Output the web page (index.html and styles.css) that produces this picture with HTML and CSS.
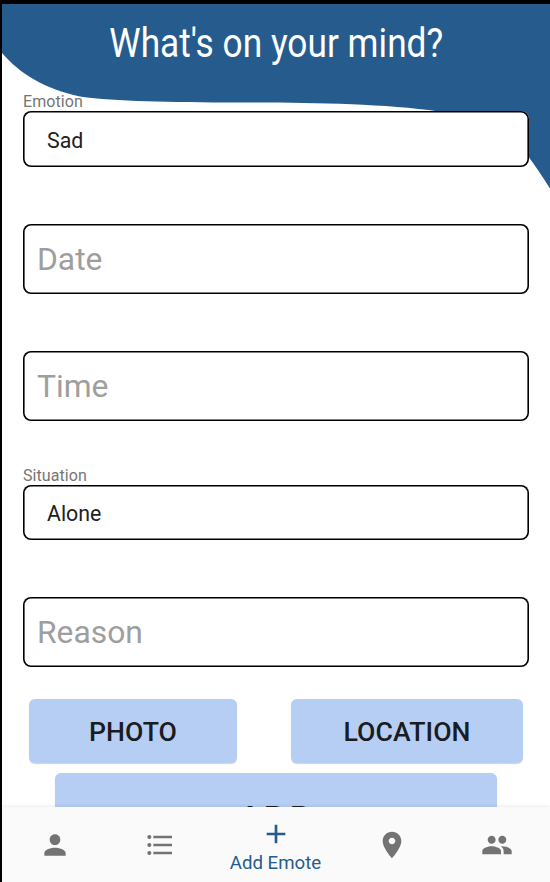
FILE: index.html
```html
<!DOCTYPE html>
<html lang="en">
<head>
<meta charset="utf-8">
<title>Add Emote</title>
<link rel="stylesheet" href="styles.css">
</head>
<body>
<div class="screen">
  <svg class="wave" viewBox="0 0 548 186" aria-hidden="true"><path d="M0 0H548V184.500Q535 164 527 153.500C503 122 479 115 437 107.500C380 99.500 310 98.700 238 98.500C165 98.300 115 97.500 78 92.500C43 85 18 70 0 49Z"/></svg>
  <main class="form">
    <h1 class="title"><span class="title-text">What's on your mind?</span></h1>
    <div class="label">Emotion</div>
    <div class="select">Sad</div>
    <div class="input">Date</div>
    <div class="input time">Time</div>
    <div class="label situation">Situation</div>
    <div class="select">Alone</div>
    <div class="input reason">Reason</div>
    <div class="actions">
      <button class="button photo">PHOTO</button>
      <button class="button location">LOCATION</button>
    </div>
    <button class="button add">ADD</button>
  </main>
  <nav class="nav">
    <div class="tab"><svg class="icon" viewBox="0 0 24 24"><path d="M12 12c2.210 0 4-1.790 4-4s-1.790-4-4-4-4 1.790-4 4 1.790 4 4 4zm0 2c-2.670 0-8 1.340-8 4v2h16v-2c0-2.660-5.330-4-8-4z"/></svg></div>
    <div class="tab"><svg class="icon" viewBox="0 0 24 24"><path d="M4 10.500c-.83 0-1.500.67-1.500 1.500s.67 1.500 1.500 1.500 1.500-.67 1.500-1.500-.67-1.500-1.500-1.500zm0-6c-.83 0-1.500.67-1.500 1.500S3.170 7.500 4 7.500 5.500 6.830 5.500 6 4.830 4.500 4 4.500zm0 12c-.83 0-1.500.68-1.500 1.500s.68 1.500 1.500 1.500 1.500-.68 1.500-1.500-.67-1.500-1.500-1.500zM7 19h14v-2H7v2zm0-6h14v-2H7v2zm0-8v2h14V5H7z"/></svg></div>
    <div class="tab active"><svg class="icon" viewBox="0 0 24 24"><path d="M19 13h-6v6h-2v-6H5v-2h6V5h2v6h6v2z"/></svg><span class="tab-label">Add Emote</span></div>
    <div class="tab"><svg class="icon" viewBox="0 0 24 24"><path d="M12 2C8.130 2 5 5.130 5 9c0 5.250 7 13 7 13s7-7.750 7-13c0-3.870-3.130-7-7-7zm0 9.500c-1.380 0-2.500-1.120-2.500-2.500s1.120-2.500 2.500-2.500 2.500 1.120 2.500 2.500-1.120 2.500-2.500 2.500z"/></svg></div>
    <div class="tab"><svg class="icon" viewBox="0 0 24 24"><path d="M16 11c1.660 0 2.990-1.340 2.990-3S17.660 5 16 5c-1.660 0-3 1.340-3 3s1.340 3 3 3zm-8 0c1.660 0 2.990-1.340 2.990-3S9.660 5 8 5C6.340 5 5 6.340 5 8s1.340 3 3 3zm0 2c-2.330 0-7 1.170-7 3.500V19h14v-2.500c0-2.330-4.670-3.500-7-3.500zm8 0c-.29 0-.62.02-.97.05 1.160.84 1.970 1.970 1.970 3.450V19h6v-2.500c0-2.330-4.670-3.500-7-3.500z"/></svg></div>
  </nav>
</div>
</body>
</html>
```
FILE: styles.css
```css
* { box-sizing: border-box; }

body {
  margin: 0;
  font-family: Roboto, "Liberation Sans", sans-serif;
  background: #fff;
}

.screen {
  position: relative;
  display: flex;
  flex-direction: column;
  height: 882px;
  overflow: hidden;
  border-top: 4px solid #000;
  border-left: 2px solid #000;
}

.wave {
  position: absolute;
  top: 0;
  left: 0;
  width: 548px;
  height: 186px;
  fill: #265c8d;
}

.form {
  position: relative;
  height: 803px;
  padding: 0 21px;
  overflow: hidden;
}

.title {
  display: flex;
  justify-content: center;
  height: 88px;
  margin: 0;
  padding: 16px 0 0 1px;
  color: #fff;
  font-size: 40px;
  font-weight: 400;
  line-height: 47px;
  white-space: nowrap;
}

.title-text { transform: scaleX(.882); }

.label {
  height: 19px;
  color: #757575;
  font-size: 16px;
  line-height: 19px;
  letter-spacing: .08px;
}

.select, .input {
  display: flex;
  align-items: center;
  width: 506px;
  border-radius: 8px;
  background: #fff;
  box-shadow: inset 0 0 0 1.600px #000;
}

.select {
  height: 56px;
  padding: 2px 0 0 24px;
  color: #212121;
  font-size: 21.330px;
}

.input {
  height: 70px;
  margin-top: 57px;
  padding-left: 14px;
  color: #9e9e9e;
  font-size: 31.800px;
}

.time { margin-top: 56.600px; }

.situation { margin-top: 45.400px; }

.situation + .select { height: 55px; }

.reason { margin-top: 57.500px; }

.actions {
  display: flex;
  justify-content: space-between;
  margin-top: 31.500px;
  padding: 0 6px;
}

.button {
  height: 64px;
  padding: 2px 0 0;
  border: 0;
  border-radius: 6px;
  background: #b6cef3;
  box-shadow: 0 1px 1px rgba(0, 0, 0, .18);
  color: #191c20;
  font-family: inherit;
  font-size: 26.670px;
  font-weight: 500;
}

.photo { width: 208px; }

.location {
  width: 232px;
  letter-spacing: .1px;
}

.add {
  display: block;
  width: 442px;
  height: 94px;
  margin: 10.500px auto 0 32px;
  font-size: 40px;
}

.nav {
  position: relative;
  display: flex;
  height: 75px;
  background: #fafafa;
  box-shadow: 0 -1px 3px rgba(0, 0, 0, .08);
  color: #737373;
}

.tab {
  display: flex;
  flex-direction: column;
  align-items: center;
  width: 105px;
  padding-top: 22px;
}

.active {
  width: 127px;
  padding-top: 11px;
  color: #265c8d;
}

.icon {
  width: 32px;
  height: 32px;
  fill: currentColor;
}

.tab-label {
  margin-top: 2px;
  font-size: 18.670px;
  line-height: 22px;
  white-space: nowrap;
}
```
